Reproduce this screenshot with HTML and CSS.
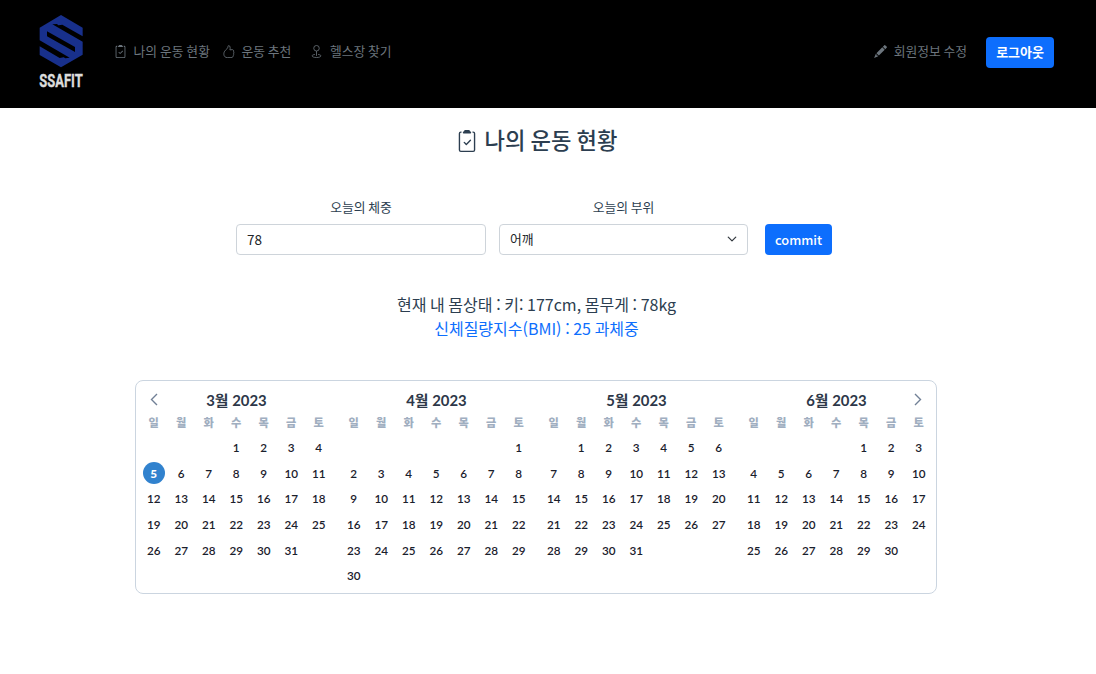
FILE: index.html
```html
<!DOCTYPE html>
<html lang="ko">
<head>
<meta charset="utf-8">
<title>SSAFIT</title>
<link rel="stylesheet" href="styles.css">
</head>
<body>
<svg width="0" height="0" class="defs">
  <symbol id="clipboard" viewBox="0 0 16 16"><path fill-rule="evenodd" d="M10.854 7.146a.5.5 0 0 1 0 .708l-3 3a.5.5 0 0 1-.708 0l-1.5-1.5a.5.5 0 1 1 .708-.708L7.5 9.793l2.646-2.647a.5.5 0 0 1 .708 0z"/><path d="M10 .5a.5.5 0 0 0-.5-.5h-3a.5.5 0 0 0-.5.5.5.5 0 0 1-.5.5.5.5 0 0 0-.5.5V2a.5.5 0 0 0 .5.5h5A.5.5 0 0 0 11 2v-.5a.5.5 0 0 0-.5-.5.5.5 0 0 1-.5-.5Z"/><path d="M3.500 1h.585A1.498 1.498 0 0 0 4 1.500V2H3.500a.5.5 0 0 0-.5.5v12a.5.5 0 0 0 .5.5h9a.5.5 0 0 0 .5-.5v-12a.5.5 0 0 0-.5-.5H12v-.5c0-.175-.03-.344-.085-.5h.585A1.500 1.500 0 0 1 14 2.500v12a1.500 1.500 0 0 1-1.500 1.500h-9A1.500 1.500 0 0 1 2 14.500v-12A1.500 1.500 0 0 1 3.500 1Z"/></symbol>
</svg>
<header class="header">
  <a class="brand">
    <svg class="logo" width="46" height="54" viewBox="0 0 138 162">
      <path fill="#18308c" fill-rule="evenodd" d="M69 0 134 38V64L73 29 61 31 57 27 43 28 134 80V119L69 157 5 120V94L65 129 77 127 82 130 95 128 5 76V38ZM27 49V64L111 111V96Z"/>
    </svg>
    <span class="brand-text">SSAFIT</span>
  </a>
  <nav class="nav">
    <a class="link"><svg class="icon" width="13" height="13"><use href="#clipboard"/></svg>나의 운동 현황</a>
    <a class="link link-thumb"><svg class="icon" width="13" height="13" viewBox="0 0 16 16" fill="none" stroke="currentColor"><path d="M8.500.6c-.8.1-1 .5-1.100 1.200C7.200 4.500 5.500 5 4.200 6.500 2.800 8 2.200 9.500 2.300 11.500c.2 2.500 1.700 4 4.200 4H11c2 0 2.600-.8 2.700-2.200.8-.8.8-1.600.5-2.400.6-.9.600-1.700.1-2.500.4-1.700-.5-2.700-1.800-2.700L9.700 6c.7-2 .4-5-1.200-5.400Z"/></svg>운동 추천</a>
    <a class="link link-geo"><svg class="icon" width="13" height="13" viewBox="0 0 16 16" fill="none" stroke="currentColor"><circle cx="8" cy="4" r="3.400"/><path d="M8 7.400v6M6 11.600c-2 .3-3.400.9-3.400 1.800 0 1.200 2.400 2 5.400 2s5.400-.8 5.400-2c0-.9-1.400-1.500-3.400-1.800"/></svg>헬스장 찾기</a>
  </nav>
  <div class="account">
    <a class="link"><svg class="icon" width="13" height="13" viewBox="0 0 16 16"><path d="m12.800.2-1.900 1.900 3 3 1.900-1.900c.3-.3.300-.6 0-.9L13.700.2c-.3-.3-.6-.3-.9 0ZM10.200 2.800 3 10l3 3 7.200-7.200ZM2.300 10.800.1 15.900l5.100-2.200-.8-.8H3.200v-1.200Z"/></svg>회원정보 수정</a>
    <button class="btn">로그아웃</button>
  </div>
</header>
<main class="main">
  <h1 class="title"><svg class="title-icon" width="22" height="22"><use href="#clipboard"/></svg>나의 운동 현황</h1>
  <form class="form">
    <label class="field">오늘의 체중<input class="control" type="text" value="78"></label>
    <label class="field">오늘의 부위<span class="control select">어깨<svg width="10" height="10" viewBox="0 0 16 16" fill="none" stroke="#343a40" stroke-width="2" stroke-linecap="round" stroke-linejoin="round"><path d="m2 5 6 6 6-6"/></svg></span></label>
    <button class="btn commit" type="button">commit</button>
  </form>
  <p class="status">현재 내 몸상태 : 키: 177cm, 몸무게 : 78kg<br><span class="bmi">신체질량지수(BMI) : 25 과체중</span></p>
  <section class="calendar" id="calendar">
    <svg class="arrow prev" width="8" height="13" viewBox="0 0 8 13"><path d="M7 1 1.500 6.500 7 12"/></svg>
    <svg class="arrow next" width="8" height="13" viewBox="0 0 8 13"><path d="m1 1 5.500 5.500L1 12"/></svg>
  </section>
</main>
<script src="calendar.js"></script>
</body>
</html>
```
FILE: styles.css
```css
* { box-sizing: border-box; }
body {
  margin: 0;
  background: #fff;
  color: #2c3e50;
  font: 400 16px/24px "Noto Sans CJK KR", sans-serif;
}
.defs { position: absolute; }
.header {
  height: 108px;
  padding: 0 42px 4px 38px;
  display: flex;
  align-items: center;
  background: #000;
  color: #6c757d;
  font-size: 12.8px;
}
.brand {
  width: 46px;
  height: 77px;
  margin-right: 29.500px;
  display: flex;
  flex-direction: column;
  align-items: center;
}
.logo { flex: none; margin-top: 1px; }
.brand-text {
  margin-top: 1px;
  color: #dcdcdc;
  font: 700 18.500px/22px "Roboto", sans-serif;
  -webkit-text-stroke: 0.4px #dcdcdc;
  transform: scaleX(0.7);
}
.nav, .account, .link { display: flex; align-items: center; white-space: nowrap; }
.nav { padding-bottom: 2px; }
.link { gap: 7px; word-spacing: -0.700px; }
.link-thumb { margin-left: 12.500px; gap: 6px; }
.link-geo { margin-left: 18.500px; }
.account { margin-left: auto; gap: 19px; }
.account .link { padding-bottom: 2px; }
.icon { flex: none; fill: currentColor; }
.link-thumb .icon, .link-geo .icon { fill: none; }
.title-icon { fill: currentColor; }
.btn {
  height: 31px;
  padding: 0 10px;
  border: 0;
  border-radius: 4px;
  background: #0d6efd;
  color: #fff;
  font: 700 13px/30px "Noto Sans CJK KR", sans-serif;
}
.main {
  width: 1073px;
  padding-top: 20px;
  display: flex;
  flex-direction: column;
  align-items: center;
}
.title {
  margin: 0;
  display: flex;
  align-items: center;
  gap: 7px;
  font-size: 22.2px;
  font-weight: 500;
  line-height: 22px;
  height: 24px;
  padding-bottom: 2px;
  word-spacing: -1px;
}
.title-icon { margin-top: 4px; }
.form {
  margin: 37px 0 0 -5px;
  display: flex;
  align-items: flex-end;
}
.field {
  width: 250px;
  margin-right: 13px;
  display: flex;
  flex-direction: column;
  text-align: center;
  font-size: 12.8px;
  line-height: 35px;
  word-spacing: -0.700px;
}
.field + .field { width: 249px; margin-right: 17px; }
.control {
  height: 31px;
  padding: 0 10px 1px;
  border: 1px solid #ced4da;
  border-radius: 4px;
  background: #fff;
  color: #212529;
  font: 400 13.500px/28px "Noto Sans CJK KR", sans-serif;
  text-align: left;
}
.select { display: flex; align-items: center; justify-content: space-between; font-size: 12.800px; }
.commit { width: 67px; font-size: 12.800px; font-weight: 500; }
.status { margin: 37px 0 0; text-align: center; word-spacing: -0.850px; }
.bmi { color: #0d6efd; }
.calendar {
  position: relative;
  width: 802px;
  height: 214px;
  margin: 40px 0 0 -1px;
  padding: 9px 4px 0;
  display: flex;
  gap: 8px;
  border: 1px solid #cbd5e0;
  border-radius: 8px;
}
.arrow {
  position: absolute;
  top: 12px;
  fill: none;
  stroke: #718096;
  stroke-width: 1.400;
}
.prev { left: 14px; }
.next { right: 14px; }
.month { width: 192px; font-family: Lato, "Noto Sans CJK KR", sans-serif; }
.month-title {
  margin: 0 0 0 1px;
  color: #2d3748;
  font-size: 14.900px;
  font-weight: 700;
  line-height: 20px;
  text-align: center;
}
.grid {
  display: grid;
  grid-template-columns: repeat(7, 27.500px);
  grid-template-rows: 24.500px;
  grid-auto-rows: 25.600px;
  align-items: center;
  justify-items: center;
}
.weekday { padding-top: 2px; color: #a0aec0; font-size: 11.200px; font-weight: 900; line-height: 20px; }
.day { color: #1a202c; font-size: 11.700px; font-weight: 600; line-height: 22px; }
.today {
  width: 22px;
  border-radius: 50%;
  background: #3182ce;
  color: #fff;
  font-weight: 900;
  text-align: center;
}
```
FILE: calendar.js
```js
const months = [
  { month: 3, offset: 3, days: 31, today: 5 },
  { month: 4, offset: 6, days: 30 },
  { month: 5, offset: 1, days: 31 },
  { month: 6, offset: 4, days: 30 }
];
const calendar = document.getElementById("calendar");
for (const m of months) {
  const names = [..."일월화수목금토"].map(n => `<span class="weekday">${n}</span>`);
  const blanks = Array(m.offset).fill("<span></span>");
  const days = Array.from({ length: m.days }, (_, i) =>
    `<span class="day${m.today === i + 1 ? " today" : ""}">${i + 1}</span>`);
  const el = document.createElement("div");
  el.className = "month";
  el.innerHTML = `<h2 class="month-title">${m.month}월 2023</h2><div class="grid">${[...names, ...blanks, ...days].join("")}</div>`;
  calendar.appendChild(el);
}
```
